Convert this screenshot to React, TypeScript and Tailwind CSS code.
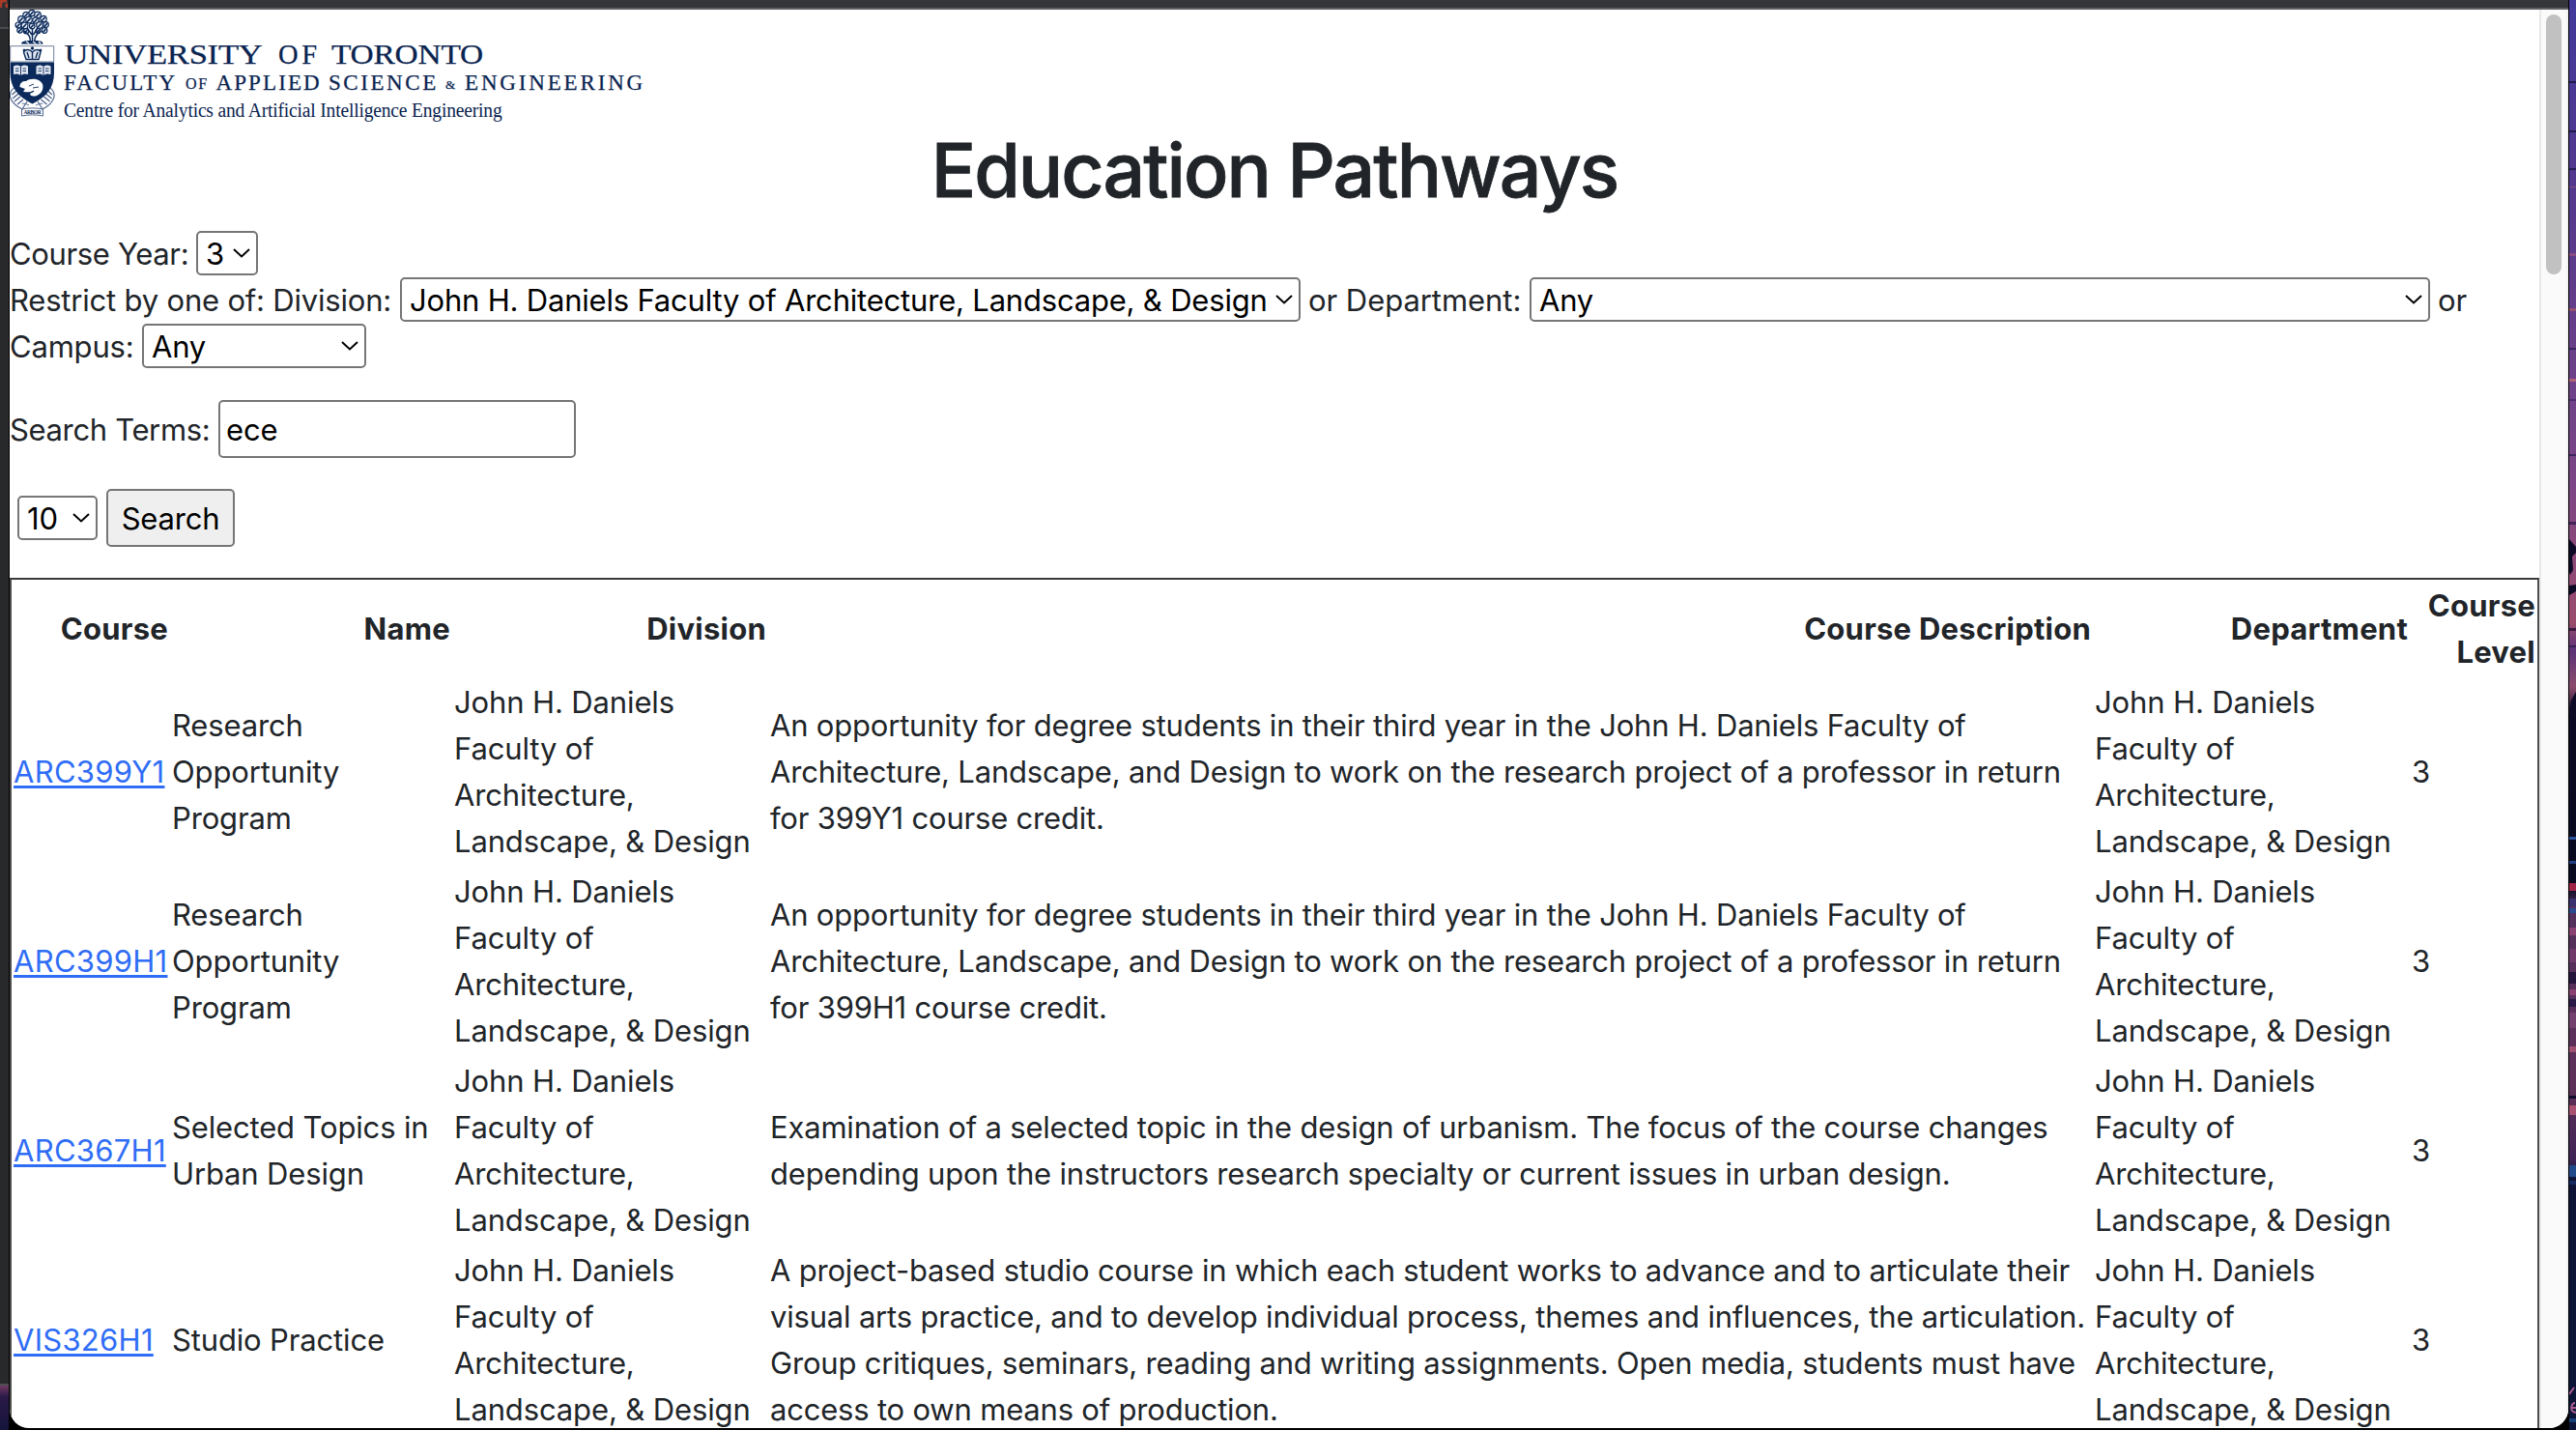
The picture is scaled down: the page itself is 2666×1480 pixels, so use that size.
import type { ReactNode } from "react";

const NAVY = "#0b2a5b";

const LEAVES: [number, number, number][] = [
  [23, 3.5, 3.2], [17, 5.5, 3.2], [29, 5.5, 3.3], [12, 10, 3.3], [35, 9.5, 3.2],
  [20, 10.5, 3.3], [27, 11, 3.2], [9, 16, 3], [15.5, 16.5, 3.4], [31, 16, 3.3],
  [37.5, 15.5, 2.8], [23.2, 17, 2.8], [10.5, 21.5, 2.7], [17, 22.3, 2.6],
  [36, 21.5, 2.8], [29.5, 22, 2.5],
];

function Crest() {
  return (
    <svg className="block h-[112px] w-[47px] shrink-0" viewBox="0 0 47 112" fill="none" stroke={NAVY}>
      <g strokeWidth="1.2">
        {LEAVES.map(([x, y, r], i) => (
          <g key={i}>
            <circle cx={x} cy={y} r={r} fill="#e9edf5" />
            <path d={`M${x - r * 0.6} ${y + r * 0.7}L${x + r * 0.5} ${y - r * 0.5}`} strokeWidth="1.6" />
          </g>
        ))}
      </g>
      <path d="M21 34C22 29 20.500 26 15 22M26 34C25 29 27 26 32 22M23.500 33V19M23 26L18 19M24.500 26L29 19" strokeWidth="1.500" />
      <path d="M12 35.500C12 32.500 17 32 20.500 32H27C31 32 34.500 32.500 34.500 35.500Z" fill={NAVY} stroke="none" />
      <path d="M17 33L20 35M24 33L27 35M30 33L32 35" stroke="#fff" strokeWidth="1.300" />

      <path d="M0.700 37.700H45.700V54H0.700Z" fill="#fff" strokeWidth="1" stroke="#6f7f9d" />
      <path d="M17 51.500H30L32 44C31 40.500 26 41 23.500 44C21 41 16 40.500 14.500 44ZM23.500 44V51M18 44L20 50M29 44L27 50" strokeWidth="1.400" fill="#dfe5ef" />
      <circle cx="23.500" cy="40" r="1.300" fill={NAVY} />
      <circle cx="15" cy="42" r="1" fill={NAVY} />
      <circle cx="32" cy="42" r="1" fill={NAVY} />

      <path d="M7 80C1 82 -1 88 1.500 93C4 98 9 101 13 103L18 95M39.500 80C45.500 82 47.500 88 45 93C42.500 98 38 101 34 103L29 95" strokeWidth="1.200" stroke="#53688f" />
      <path d="M2.500 88L7 84M3 92L9 87M5 95L11 90M8 98L14 93M44 88L39.500 84M43.500 92L37.500 87M41.500 95L35.500 90M38.500 98L32.500 93" strokeWidth="1.500" stroke="#53688f" />
      <path d="M0.500 54.500H46V65C46 80 39 90 23.500 97.500C8 90 0.500 80 0.500 65Z" fill={NAVY} stroke="none" />
      <path d="M4 58.500C7 57 9.500 57.500 11.500 59C13.500 57.500 16 57 19 58.500V67C16 66 13.500 66.500 11.500 68C9.500 66.500 7 66 4 67ZM27.500 58.500C30.500 57 33 57.500 35 59C37 57.500 39.500 57 42.500 58.500V67C39.500 66 37 66.500 35 68C33 66.500 30.500 66 27.500 67Z" fill="#dfe5ef" stroke="none" />
      <path d="M11.500 59V68M35 59V68M6 61H9.500M6 63.500H9.500M13.500 61H17M13.500 63.500H17M29.500 61H33M29.500 63.500H33M37 61H40.500M37 63.500H40.500" strokeWidth="0.900" />
      <path d="M10.500 80C10.500 76 13 73.500 17 74C21 70.500 31 70.500 34 77C35.500 82 33 87 28 89C25 90.500 20 89 21.500 86.500C24 86 26 84.500 25 83.500C22 85.500 17 86 14 84.500L16 82Z" fill="#fff" stroke="none" />
      <path d="M20 79L25 77M24 81L30 80" strokeWidth="0.900" />

      <path d="M13 98C13 96 18 98 20 99M34 98C34 96 29 98 27 99M12.500 103C19 101.500 28 101.500 34.500 103V110C28 108.500 19 108.500 12.500 110Z" strokeWidth="1" stroke="#53688f" />
      <text x="23.500" y="108" textAnchor="middle" fontFamily="Liberation Serif, serif" fontSize="5.500" fontWeight="700" fill={NAVY} stroke="none" textLength="18">ARBOR</text>
    </svg>
  );
}

function Logo() {
  return (
    <div className="flex h-[118px]">
      <Crest />
      <svg className="block h-[118px] w-[620px]" viewBox="57 10 620 118" fill="#0a2450" fontFamily="'Liberation Serif', serif">
        <g stroke="#0a2450" strokeWidth="0.250">
          <text x="66.500" y="66.300" fontSize="28.500" textLength="205" lengthAdjust="spacingAndGlyphs">UNIVERSITY</text>
          <text x="288" y="66.300" fontSize="28.500" textLength="40" lengthAdjust="spacing">OF</text>
          <text x="343" y="66.300" fontSize="28.500" textLength="157" lengthAdjust="spacingAndGlyphs">TORONTO</text>
          <text x="66" y="93" fontSize="23" textLength="115" lengthAdjust="spacing">FACULTY</text>
          <text x="192" y="92" fontSize="16" textLength="22" lengthAdjust="spacing">OF</text>
          <text x="223.500" y="93" fontSize="23" textLength="107" lengthAdjust="spacing">APPLIED</text>
          <text x="340" y="93" fontSize="23" textLength="111" lengthAdjust="spacing">SCIENCE</text>
          <text x="461" y="92" fontSize="13" textLength="10" lengthAdjust="spacingAndGlyphs">&amp;</text>
          <text x="481" y="93" fontSize="23" textLength="184" lengthAdjust="spacing">ENGINEERING</text>
        </g>
        <text x="66" y="120.500" fontSize="20.500" textLength="453.500" lengthAdjust="spacingAndGlyphs">
          Centre for Analytics and Artificial Intelligence Engineering
        </text>
      </svg>
    </div>
  );
}

function Select({ value, className }: { value: string; className: string }) {
  return (
    <div className={`flex h-[46px] shrink-0 items-center justify-between rounded-[5px] border-2 border-[#767676] bg-white pr-[6px] pl-2 text-black ${className}`}>
      <span className="pt-[2px]">{value}</span>
      <svg className="block h-[10px] w-[18px]" viewBox="0 0 18 10" fill="none" stroke="#000" strokeWidth="2">
        <path d="M1 1L9 8.500L17 1" />
      </svg>
    </div>
  );
}

const FACULTY = ["John H. Daniels", "Faculty of", "Architecture,", "Landscape, & Design"];

const COURSES: { code: string; name: string[]; about: string[] }[] = [
  {
    code: "ARC399Y1",
    name: ["Research", "Opportunity", "Program"],
    about: [
      "An opportunity for degree students in their third year in the John H. Daniels Faculty of",
      "Architecture, Landscape, and Design to work on the research project of a professor in return",
      "for 399Y1 course credit.",
    ],
  },
  {
    code: "ARC399H1",
    name: ["Research", "Opportunity", "Program"],
    about: [
      "An opportunity for degree students in their third year in the John H. Daniels Faculty of",
      "Architecture, Landscape, and Design to work on the research project of a professor in return",
      "for 399H1 course credit.",
    ],
  },
  {
    code: "ARC367H1",
    name: ["Selected Topics in", "Urban Design"],
    about: [
      "Examination of a selected topic in the design of urbanism. The focus of the course changes",
      "depending upon the instructors research specialty or current issues in urban design.",
    ],
  },
  {
    code: "VIS326H1",
    name: ["Studio Practice"],
    about: [
      "A project-based studio course in which each student works to advance and to articulate their",
      "visual arts practice, and to develop individual process, themes and influences, the articulation.",
      "Group critiques, seminars, reading and writing assignments. Open media, students must have",
      "access to own means of production.",
    ],
  },
];

function Lines({ lines }: { lines: string[] }) {
  return (
    <>
      {lines.map((line) => (
        <div key={line}>{line}</div>
      ))}
    </>
  );
}

function Th({ children }: { children: ReactNode }) {
  return <th className="px-[2px] pt-[3px] pb-[2px] text-right align-middle font-bold tracking-[0.25px]">{children}</th>;
}

function Results() {
  return (
    <table className="w-[2618px] table-fixed border-separate border-spacing-0 border-2 border-[#4d4d4d] border-t-[#3a3a3a] whitespace-nowrap">
      <colgroup>
        <col className="w-[164px]" />
        <col className="w-[292px]" />
        <col className="w-[327px]" />
        <col className="w-[1371px]" />
        <col className="w-[328px]" />
        <col className="w-[132px]" />
      </colgroup>
      <thead>
        <tr>
          <Th>Course</Th>
          <Th>Name</Th>
          <Th>Division</Th>
          <Th>Course Description</Th>
          <Th>Department</Th>
          <Th>
            Course
            <br />
            Level
          </Th>
        </tr>
      </thead>
      <tbody>
        {COURSES.map((c) => (
          <tr key={c.code}>
            <td className="p-[2px]">
              <a href="#" className="tracking-[0.28px] text-[#2f6df6] underline decoration-[3px] underline-offset-[3px]">
                {c.code}
              </a>
            </td>
            <td className="p-[2px] tracking-[-0.15px]"><Lines lines={c.name} /></td>
            <td className="p-[2px] tracking-[-0.13px]"><Lines lines={FACULTY} /></td>
            <td className="p-[2px]"><Lines lines={c.about} /></td>
            <td className="p-[2px] tracking-[-0.13px]"><Lines lines={FACULTY} /></td>
            <td className="p-[2px]">3</td>
          </tr>
        ))}
      </tbody>
    </table>
  );
}

const BANDS: [number, number, string][] = [
  [84, 2, "#1c1a4a"], [135, 2, "#1c1a4a"], [174, 2, "#241f55"], [193, 1, "#80507f"], [262, 3, "#8a4a80"],
  [319, 3, "#93506f"], [360, 2, "#3a2560"], [392, 3, "#b0607a"], [413, 2, "#4a2f70"], [470, 2, "#3c2560"],
  [540, 3, "#40245a"], [650, 3, "#3a1a40"], [668, 2, "#3a2055"], [866, 3, "#2a5098"], [891, 3, "#204080"],
  [914, 8, "#a02448"], [930, 8, "#3a3070"], [940, 5, "#2c4a90"], [960, 8, "#8a4070"], [982, 14, "#703a6a"],
  [1006, 12, "#25143c"], [1024, 6, "#8a4070"], [1034, 8, "#2a1a48"], [1048, 16, "#74406e"], [1083, 6, "#a05070"],
  [1134, 3, "#120d30"], [1144, 10, "#a8506f"], [1206, 12, "#214a8a"], [1222, 4, "#152a60"], [1468, 4, "#173f78"],
];

function RightWallpaper() {
  return (
    <svg className="block h-[1480px] w-[7px]" viewBox="0 0 7 1480" preserveAspectRatio="none">
      <defs>
        <linearGradient id="dusk" x1="0" y1="0" x2="0" y2="1">
          <stop offset="0" stopColor="#41399a" />
          <stop offset="0.150" stopColor="#56398c" />
          <stop offset="0.340" stopColor="#7d4686" />
          <stop offset="0.435" stopColor="#9a4c6c" />
          <stop offset="0.455" stopColor="#5c3278" />
          <stop offset="0.480" stopColor="#8c4c6c" />
          <stop offset="0.500" stopColor="#0b0a22" />
          <stop offset="0.620" stopColor="#090920" />
          <stop offset="0.635" stopColor="#54305e" />
          <stop offset="0.760" stopColor="#5e3058" />
          <stop offset="0.810" stopColor="#402456" />
          <stop offset="0.825" stopColor="#0c1336" />
          <stop offset="1" stopColor="#0c1538" />
        </linearGradient>
      </defs>
      <rect width="7" height="1480" fill="url(#dusk)" />
      {BANDS.map(([y, h, fill]) => (
        <rect key={y} y={y} width="7" height={h} fill={fill} />
      ))}
      <path d="M0 558L7 566V572L3 576L4 590L1 595L0 592ZM0 606L7 605V612L0 616ZM2 725L7 716V745L0 735Z" fill="#0c0a24" />
      <path d="M0 1443L5 1436M6 1452C2 1452 1 1459 4 1461L7 1462M2 1457H7" stroke="#a85c90" strokeWidth="2" fill="none" />
    </svg>
  );
}

function LeftBackdrop() {
  return (
    <svg className="block h-[1480px] w-[10px]" viewBox="0 0 10 1480">
      <defs>
        <linearGradient id="night" x1="0" y1="0" x2="0" y2="1">
          <stop offset="0" stopColor="#713a63" />
          <stop offset="0.250" stopColor="#2b1a48" />
          <stop offset="1" stopColor="#14143c" />
        </linearGradient>
      </defs>
      <rect width="10" height="1434" fill="#28292b" />
      <rect width="8" height="28" fill="#303134" />
      <path d="M0 0H7V3L4 2L2 4V8H0ZM5 5L8 3V8H6Z" fill="#a83a28" />
      <rect y="28" width="9" height="2" fill="#4b4c4e" />
      <rect y="1432" width="10" height="2" fill="#4f4f52" />
      <rect y="1434" width="10" height="46" fill="url(#night)" />
      <rect x="9" width="1" height="1480" fill="#000" />
    </svg>
  );
}

export default function App() {
  return (
    <div className="flex h-[1480px] w-[2666px] overflow-hidden bg-black font-['Inter',sans-serif] text-[31px] leading-[48px] tracking-[-0.195px] text-[#212529]">
      <LeftBackdrop />
      <div className="flex h-[1478px] w-[2648px] shrink-0 flex-col overflow-hidden rounded-b-[20px] bg-white">
        <div className="h-[10px] shrink-0 border-b-2 border-[#5f6064] bg-[#35363a]" />
        <div className="flex min-h-0 flex-1">
          <main className="w-[2618px] shrink-0 overflow-hidden whitespace-nowrap">
            <Logo />
            <h1 className="h-[110px] text-center text-[77px] leading-[97px] font-medium tracking-[-1.95px] [-webkit-text-stroke:0.8px_#212529]">Education Pathways</h1>
            <div className="flex h-12 items-center">
              <span className="w-[193px] pt-[2px] tracking-[-0.35px]">Course Year:</span>
              <Select value="3" className="w-[64px]" />
            </div>
            <div className="flex h-12 items-center">
              <span className="w-[404px] pt-[2px]">Restrict by one of: Division:</span>
              <Select value="John H. Daniels Faculty of Architecture, Landscape, & Design" className="w-[932px]" />
              <span className="w-[237px] pt-[2px] pl-2 tracking-[-0.05px]">or Department:</span>
              <Select value="Any" className="w-[932px]" />
              <span className="pt-[2px] pl-2">or</span>
            </div>
            <div className="flex h-12 items-center">
              <span className="w-[137px] pt-[2px]">Campus:</span>
              <Select value="Any" className="w-[232px]" />
            </div>
            <div className="mt-8 flex h-[60px] items-center">
              <span className="w-[216px] pt-[2px] tracking-[-0.35px]">Search Terms:</span>
              <div className="h-[60px] w-[370px] rounded-[5px] border-2 border-[#767676] px-[6px] leading-[58px] text-black">ece</div>
            </div>
            <div className="mt-8 mb-8 flex h-[60px] items-center gap-[9px] pl-2">
              <Select value="10" className="w-[83px]" />
              <button className="h-[60px] w-[133px] rounded-[5px] border-2 border-[#767676] bg-[#efefef] pt-[2px] text-black">Search</button>
            </div>
            <Results />
          </main>
          <div className="flex w-[30px] justify-center border-r-2 border-l-2 border-r-[#f3f3f3] border-l-[#e8e8e8] bg-[#fafafa] pt-[5px]">
            <div className="h-[269px] w-4 rounded-full bg-[#c1c1c1]" />
          </div>
        </div>
      </div>
      <div className="w-px shrink-0 bg-black" />
      <RightWallpaper />
    </div>
  );
}
